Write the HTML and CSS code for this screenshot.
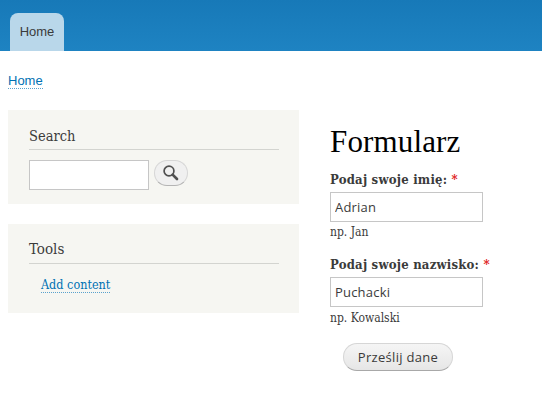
FILE: index.html
```html
<!DOCTYPE html>
<html lang="pl">
<head>
<meta charset="utf-8">
<title>Formularz</title>
<link rel="stylesheet" href="styles.css">
</head>
<body>
<header class="header"><a class="tab">Home</a></header>
<nav class="breadcrumb"><a class="link">Home</a></nav>
<div class="layout">
  <aside class="sidebar">
    <section class="block search-block">
      <h2 class="block-title">Search</h2>
      <div class="search-row">
        <input class="search-input" type="text" aria-label="Search">
        <button class="search-button" aria-label="Search">
          <svg width="16" height="16" viewBox="0 0 16 16"><circle cx="6" cy="6" r="4.9" fill="none" stroke="#505050" stroke-width="1.7"/><path d="M9.6 9.6L14 14" stroke="#505050" stroke-width="2.7" stroke-linecap="round"/></svg>
        </button>
      </div>
    </section>
    <section class="block tools-block">
      <h2 class="block-title tools-title">Tools</h2>
      <a class="tool-link">Add content</a>
    </section>
  </aside>
  <main class="content">
    <h1 class="title">Formularz</h1>
    <div class="field first-field">
      <label class="label">Podaj swoje imię: <span class="star">*</span></label>
      <input class="input" type="text" value="Adrian">
      <div class="hint">np. Jan</div>
    </div>
    <div class="field">
      <label class="label">Podaj swoje nazwisko: <span class="star">*</span></label>
      <input class="input" type="text" value="Puchacki">
      <div class="hint low-hint">np. Kowalski</div>
    </div>
    <button class="submit">Prześlij dane</button>
  </main>
</div>
</body>
</html>
```
FILE: styles.css
```css
* { box-sizing: border-box; }
body { margin: 0; width: 542px; height: 401px; overflow: hidden; background: #fff; color: #3b3b3b; font-family: "DejaVu Serif Condensed", "DejaVu Serif", serif; font-stretch: condensed; }
.header { height: 51px; padding: 13px 10px 0; background: linear-gradient(#1779b8, #1e83c2); }
.tab { display: block; width: 54px; height: 38px; border-radius: 8px 8px 0 0; background: #b9d7ea; color: #3b3b3b; font: 13px/37px "Liberation Sans", sans-serif; text-align: center; }
.breadcrumb { height: 59px; padding: 22px 8px 0; font: 13px/16px "Liberation Sans", sans-serif; }
.link { display: inline-block; height: 16px; color: #0071b3; border-bottom: 1px dotted #5aa2cd; }
.layout { display: flex; gap: 31px; padding-left: 8px; }
.sidebar { display: flex; flex-direction: column; gap: 20px; width: 291px; }
.block { padding: 15px 20px 0 21px; background: #f6f6f2; }
.search-block { height: 94px; }
.tools-block { height: 89px; }
.block-title { height: 25px; margin: 0 0 10px; border-bottom: 1px solid #d3d4d0; font-size: 14.5px; line-height: 22px; font-weight: 400; }
.tools-title { font-size: 15px; line-height: 20px; }
.search-row { display: flex; gap: 5px; }
.search-input { width: 120px; height: 30px; border: 1px solid #c6c6c6; }
.search-button { display: flex; align-items: center; justify-content: center; width: 34px; height: 26px; padding: 0 1px 1px 0; border: 1px solid #d6d6d6; border-bottom-color: #b4b4b4; border-radius: 13px; background: #f0f0f0; }
.tool-link { display: inline-block; height: 16px; margin: 2px 0 0 12px; color: #0071b3; border-bottom: 1px dotted #5aa2cd; font-size: 12.5px; line-height: 16px; }
.content { width: 180px; }
.title { height: 61px; margin: 0; color: #000; font: 400 31px/64px "Liberation Serif", serif; letter-spacing: .15px; }
.field { height: 86px; }
.first-field { height: 85px; }
.label { display: block; height: 21px; font-size: 13px; line-height: 18px; font-weight: 700; letter-spacing: .22px; white-space: nowrap; }
.star { color: #e02020; }
.input { display: block; width: 153px; height: 30px; padding: 0 4px 1px; border: 1px solid #c6c6c6; color: #3b3b3b; font: 13px "Open Sans", sans-serif; letter-spacing: .2px; }
.hint { font-size: 12px; line-height: 20px; }
.low-hint { line-height: 22px; }
.submit { display: block; width: 110px; height: 28px; margin: 1px 0 0 13px; padding: 0 0 1px; border: 1px solid #d6d6d6; border-bottom-color: #a8a8a8; border-radius: 14px; background: linear-gradient(#f5f5f5, #e6e6e6); color: #3a3a3a; font: 13px "Open Sans", sans-serif; letter-spacing: .3px; }
```
